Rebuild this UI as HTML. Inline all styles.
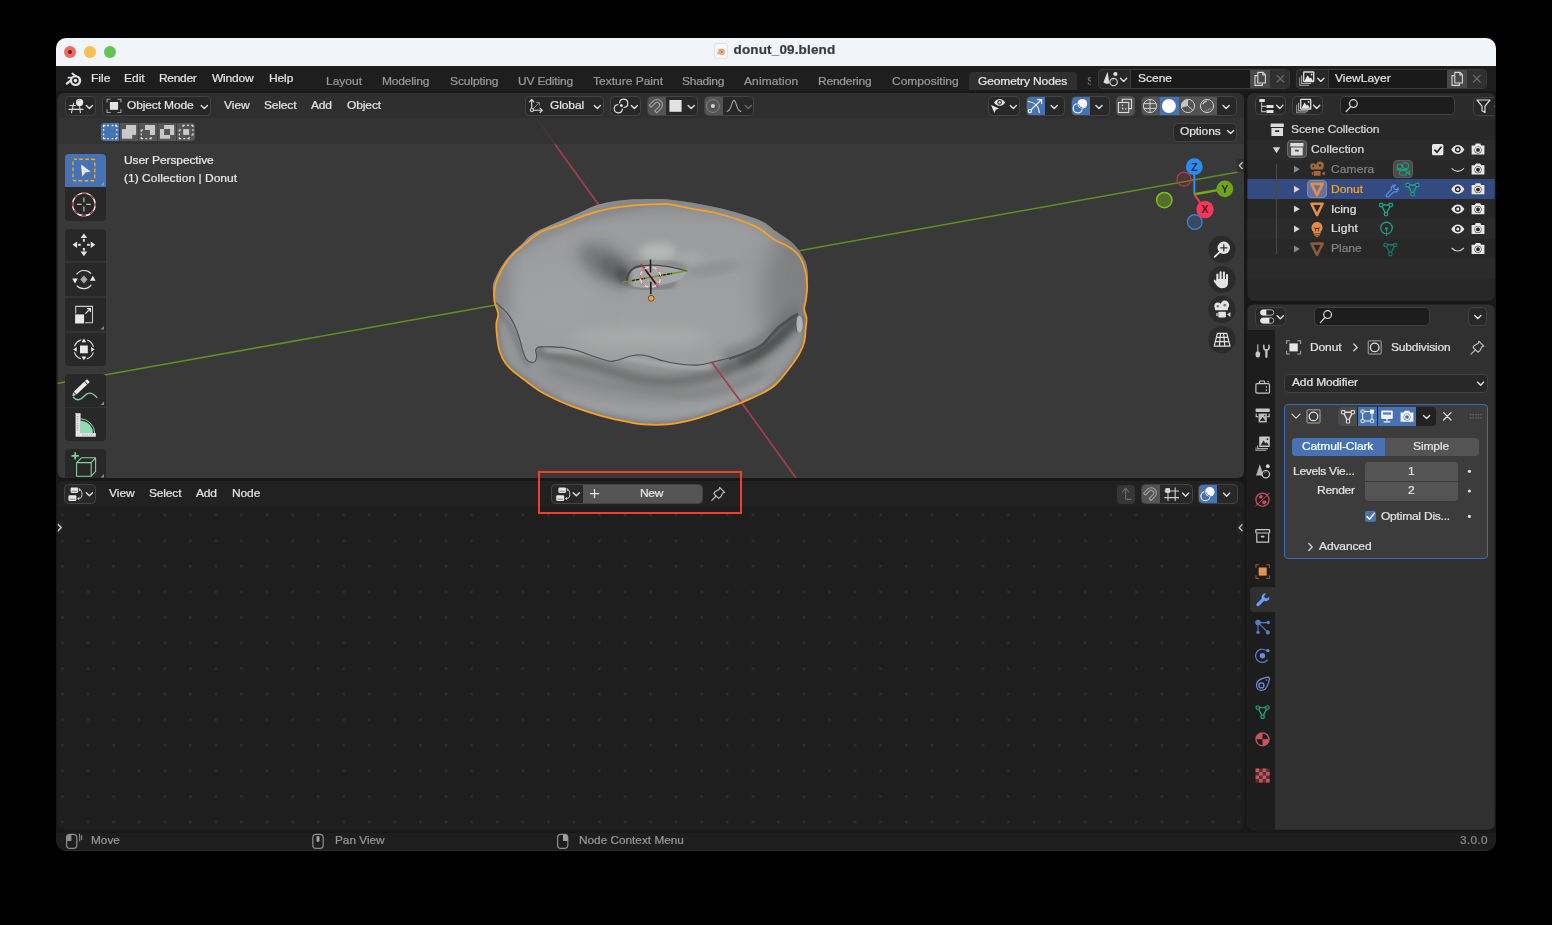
<!DOCTYPE html>
<html>
<head>
<meta charset="utf-8">
<title>donut_09.blend</title>
<style>
*{box-sizing:border-box;margin:0;padding:0}
html,body{width:1552px;height:925px;background:#000;overflow:hidden}
body{font-family:"Liberation Sans",sans-serif;font-size:12px;color:#e6e6e6;position:relative}
#win{position:absolute;left:0;top:0;width:1552px;height:925px;clip-path:inset(38px 56px 74px 56px round 10px);background:#181818;will-change:transform}
.abs{position:absolute}
.t{position:absolute;white-space:nowrap;line-height:14px;height:14px;font-size:11.2px;color:#e2e2e2;transform:scaleX(1.072);transform-origin:0 50%;margin-top:-.8px;-webkit-text-stroke:.22px}
.dim{color:#9a9a9a}
.btn{position:absolute;background:#282828;border:1px solid #434343;border-radius:4.5px}
.fld{position:absolute;background:#1d1d1d;border:1px solid #414141;border-radius:4.5px}
svg{position:absolute;overflow:visible;left:0;top:0}
svg.full{width:1552px;height:925px;pointer-events:none}
#titlebar{left:56px;top:38px;width:1440px;height:28px;background:#f1f4f8}
#menubar{left:56px;top:66px;width:1440px;height:24.5px;background:#1e1e1e}
#view3d{left:56px;top:93px;width:1188px;height:385px;background:#3d3d3d;border-radius:6px;overflow:hidden}
#nodeed{left:56px;top:481px;width:1188px;height:348px;background:#1d1d1d;border-radius:6px;overflow:hidden}
#outliner{left:1248px;top:93px;width:248px;height:208px;background:#282828;border-radius:6px;overflow:hidden}
#props{left:1248px;top:304px;width:248px;height:525px;background:#303030;border-radius:6px;overflow:hidden}
#status{left:56px;top:832.6px;width:1440px;height:19px;background:#1e1e1e}
</style>
</head>
<body>
<div id="win">
<svg width="0" height="0" style="position:absolute">
<defs>
<symbol id="chev" viewBox="-5 -5 10 10" overflow="visible"><path d="M-3.1 -1.5L0 1.6L3.1 -1.5" fill="none" stroke="#e2e2e2" stroke-width="1.35" stroke-linecap="round" stroke-linejoin="round"/></symbol>
<symbol id="chevr" viewBox="-5 -5 10 10" overflow="visible"><path d="M-1.6 -3.4L1.8 0L-1.6 3.4" fill="none" stroke="#d0d0d0" stroke-width="1.4" stroke-linecap="round" stroke-linejoin="round"/></symbol>
<symbol id="eye" viewBox="-8 -8 16 16" overflow="visible"><path d="M-6.6 0C-4.6 -3.4 -2.2 -4.6 0 -4.6S4.6 -3.4 6.6 0C4.6 3.4 2.2 4.6 0 4.6S-4.6 3.4 -6.6 0Z" fill="#e6e6e6"/><circle r="2.9" fill="#282828"/><circle r="1.5" fill="#e6e6e6"/></symbol>
<symbol id="cam" viewBox="-8 -8 16 16" overflow="visible"><path d="M-6.4 -3.6H-3.2L-2.2 -5.4H2.2L3.2 -3.6H6.4V5.6H-6.4Z" fill="#e6e6e6"/><circle cy="0.9" r="3.5" fill="#282828"/><circle cy="0.9" r="2.5" fill="none" stroke="#e6e6e6" stroke-width="1.1"/></symbol>
<symbol id="mesh" viewBox="-8 -8 16 16" overflow="visible"><path d="M-4.8 -4.2H4.8L0 5Z" fill="none" stroke-width="1.4" stroke-linejoin="round"/><rect x="-6.4" y="-5.8" width="3.2" height="3.2" rx=".6" fill="#282828" stroke-width="1.1"/><rect x="3.2" y="-5.8" width="3.2" height="3.2" rx=".6" fill="#282828" stroke-width="1.1"/><rect x="-1.6" y="3.4" width="3.2" height="3.2" rx=".6" fill="#282828" stroke-width="1.1"/></symbol>
<symbol id="tri" viewBox="-8 -8 16 16" overflow="visible"><path d="M-5.6 -5.2H5.6L0 6.2Z" fill="none" stroke-width="2.6" stroke-linejoin="round"/></symbol>
<symbol id="box" viewBox="-8 -8 16 16" overflow="visible"><rect x="-6.6" y="-6.2" width="13.2" height="3.6" rx=".6"/><path d="M-5.8 -1.6H5.8V6.4H-5.8ZM-2 .6V2.4H2V.6Z" fill-rule="evenodd"/></symbol>
</defs>
</svg>
<div id="titlebar" class="abs"></div>
<div class="abs" style="left:64px;top:46px;width:12px;height:12px;border-radius:50%;background:#ec6a5e"></div>
<div class="abs" style="left:68px;top:50px;width:4px;height:4px;border-radius:50%;background:#7d1a10"></div>
<div class="abs" style="left:84px;top:46px;width:12px;height:12px;border-radius:50%;background:#f4bf4f"></div>
<div class="abs" style="left:104px;top:46px;width:12px;height:12px;border-radius:50%;background:#61c554"></div>
<div class="abs" style="left:715px;top:44px;width:12px;height:14px;border-radius:1.5px;background:#f7f7f7;box-shadow:0 0 1.5px rgba(0,0,0,.35)"></div>
<svg class="full" viewBox="0 0 1552 925"><g fill="none" stroke="#e9a56a" stroke-width="1.3" stroke-linecap="round"><circle cx="721.6" cy="52" r="2.6" fill="#f0c39a"/><path d="M717.5 53.6L721 50.6M718.6 49.6H722"/></g><circle cx="721.7" cy="52" r="0.9" fill="#4a6fb5"/></svg>
<div class="t" style="left:733.5px;top:43px;height:16px;line-height:16px;font-size:13.5px;font-weight:bold;color:#3c3c3c;letter-spacing:.15px;transform:none">donut_09.blend</div>

<div id="menubar" class="abs"></div>
<svg class="full" viewBox="0 0 1552 925">
<g stroke="#e4e4e4" stroke-linecap="round" fill="none">
<path d="M66.8 83.6L73.6 78.2" stroke-width="2.2"/>
<path d="M68.4 77.6H75.5" stroke-width="1.9"/>
<path d="M72.4 73.5L76.4 76.8" stroke-width="1.9"/>
</g>
<ellipse cx="75.6" cy="80.6" rx="5.6" ry="5.4" fill="#e4e4e4"/>
<circle cx="75.4" cy="80.6" r="3.3" fill="#1e1e1e"/>
<circle cx="75.4" cy="80.6" r="1.8" fill="#e4e4e4"/>
</svg>
<div class="t" style="left:91px;top:72px">File</div>
<div class="t" style="left:124px;top:72px">Edit</div>
<div class="t" style="left:159px;top:72px;letter-spacing:-.3px">Render</div>
<div class="t" style="left:211.5px;top:72px;letter-spacing:-.2px">Window</div>
<div class="t" style="left:268.5px;top:72px;letter-spacing:-.1px">Help</div>

<div class="t dim" style="left:326px;top:75px">Layout</div>
<div class="t dim" style="left:382px;top:75px;letter-spacing:-.15px">Modeling</div>
<div class="t dim" style="left:449.5px;top:75px;letter-spacing:-.1px">Sculpting</div>
<div class="t dim" style="left:518px;top:75px;letter-spacing:-.15px">UV Editing</div>
<div class="t dim" style="left:593px;top:75px">Texture Paint</div>
<div class="t dim" style="left:682px;top:75px;letter-spacing:-.25px">Shading</div>
<div class="t dim" style="left:744px;top:75px;letter-spacing:.1px">Animation</div>
<div class="t dim" style="left:818px;top:75px;letter-spacing:-.2px">Rendering</div>
<div class="t dim" style="left:891.5px;top:75px">Compositing</div>
<div class="abs" style="left:969px;top:72px;width:108px;height:18.3px;background:#2f2f2f;border-radius:4px 4px 0 0"></div>
<div class="t" style="left:977.5px;top:75px;color:#e6e6e6;letter-spacing:-.1px">Geometry Nodes</div>
<div class="abs" style="left:1087px;top:75px;width:4px;height:14px;overflow:hidden"><div class="t dim" style="left:0;top:0;color:#777">S</div></div>

<!-- scene selector -->
<div class="abs" style="left:1098px;top:69px;width:192px;height:20px;border-radius:4px;background:#282828;border:1px solid #3a3a3a;overflow:hidden">
 <div class="abs" style="left:31px;top:-1px;width:120px;height:20px;background:#1a1a1a;border-left:1px solid #3a3a3a"></div>
 <div class="abs" style="left:151px;top:-1px;width:20px;height:20px;background:#484848"></div>
 <div class="abs" style="left:171px;top:-1px;width:20px;height:20px;background:#303030"></div>
</div>
<div class="t" style="left:1137.5px;top:71.5px">Scene</div>
<div class="abs" style="left:1296px;top:69px;width:191px;height:20px;border-radius:4px;background:#282828;border:1px solid #3a3a3a;overflow:hidden">
 <div class="abs" style="left:31px;top:-1px;width:120px;height:20px;background:#1a1a1a;border-left:1px solid #3a3a3a"></div>
 <div class="abs" style="left:150px;top:-1px;width:20px;height:20px;background:#484848"></div>
 <div class="abs" style="left:170px;top:-1px;width:20px;height:20px;background:#303030"></div>
</div>
<div class="t" style="left:1334.5px;top:71.5px">ViewLayer</div>
<svg class="full" viewBox="0 0 1552 925">
<path d="M1107.6 71.8L1109.4 83.2Q1106 84.6 1103.4 82.2Z" fill="#dedede"/>
<circle cx="1115.4" cy="74" r="2.1" fill="#e4e4e4"/>
<circle cx="1113.6" cy="82" r="3.7" fill="#282828" stroke="#d2d2d2" stroke-width="1.2"/><path d="M1111.8 81Q1112.6 79.8 1114 79.8" stroke="#888" stroke-width=".8" fill="none"/>
<use href="#chev" x="1118.6" y="74.8" width="10" height="10"/>
<g id="cpy" fill="none" stroke="#d8d8d8" stroke-width="1.1"><path d="M1257.6 75.6H1255V85.4H1262.4V83.2"/><path d="M1257.8 72.4H1263L1265.4 74.8V83H1257.8Z" fill="#484848"/><path d="M1262.8 72.6V75H1265.2"/></g>
<path d="M1277 75.4L1283.6 82M1283.6 75.4L1277 82" stroke="#6c6c6c" stroke-width="1.2" stroke-linecap="round"/>
<use href="#vlico" x="3" y="-27.4"/>
<use href="#chev" x="1315.8" y="74.8" width="10" height="10"/>
<use href="#cpy" x="197" y="0"/>
<path d="M1473.6 75.4L1480.2 82M1480.2 75.4L1473.6 82" stroke="#6c6c6c" stroke-width="1.2" stroke-linecap="round"/>
</svg>
<div id="v3d" class="abs" style="left:0;top:0;width:1552px;height:925px;clip-path:inset(93.2px 308px 447px 57.6px round 6px);background:#393939">
<svg class="full" viewBox="0 0 1552 925">
<defs>
<clipPath id="dsil"><path d="M492.9 286.0C493.3 281.7 495.4 278.5 497.0 275.0C498.6 271.5 500.4 268.3 502.7 264.8C505.0 261.3 508.0 257.3 511.0 254.0C514.0 250.7 517.2 248.5 520.9 245.1C524.6 241.7 527.2 237.4 533.0 233.7C538.8 230.0 547.9 226.6 555.7 223.1C563.5 219.6 572.6 215.7 579.9 212.5C587.2 209.3 591.8 206.3 599.6 204.2C607.4 202.1 616.7 200.6 626.8 199.7C636.9 198.8 652.8 198.9 660.0 198.9C667.2 198.9 663.5 198.8 670.3 199.7C677.0 200.6 690.4 202.3 700.5 204.2C710.6 206.1 720.7 208.2 730.8 211.0C740.9 213.8 753.5 217.5 761.1 220.9C768.7 224.3 771.2 228.0 776.2 231.5C781.2 235.0 787.4 238.6 791.4 242.1C795.4 245.6 797.9 248.9 800.4 252.7C802.9 256.5 805.2 260.2 806.5 264.8C807.8 269.4 807.9 275.8 808.0 280.0C808.1 284.2 807.6 286.5 807.2 290.0C806.8 293.5 806.2 298.0 805.7 301.1C805.2 304.2 804.1 305.9 804.2 308.7C804.3 311.5 806.2 314.8 806.5 318.2C806.8 321.6 806.1 324.8 805.7 328.8C805.3 332.8 805.3 338.1 804.2 342.4C803.1 346.7 801.5 350.0 798.9 354.5C796.2 359.0 792.1 364.7 788.3 369.6C784.5 374.5 780.2 380.2 776.2 384.0C772.2 387.8 769.1 389.5 764.1 392.3C759.1 395.1 751.5 398.2 746.0 400.6C740.5 403.0 736.4 404.6 730.8 406.7C725.2 408.8 719.4 411.2 712.6 413.5C705.8 415.8 697.6 418.5 690.0 420.3C682.4 422.1 675.0 423.7 667.2 424.4C659.5 425.1 650.7 424.9 643.5 424.4C636.3 423.8 630.9 422.5 623.8 421.1C616.7 419.7 608.7 417.9 601.1 415.8C593.5 413.7 585.5 411.2 578.4 408.7C571.3 406.2 565.0 403.5 558.7 400.7C552.4 397.9 545.8 394.8 540.5 391.6C535.2 388.4 531.2 384.9 526.9 381.7C522.6 378.5 518.3 375.7 514.8 372.7C511.3 369.7 508.2 367.1 505.7 363.6C503.2 360.1 501.1 355.5 499.7 351.5C498.3 347.5 498.0 343.9 497.4 339.4C496.8 334.8 496.2 328.5 496.3 324.2C496.4 319.9 498.5 317.5 498.2 313.6C497.9 309.7 495.3 305.6 494.4 301.0C493.5 296.4 492.5 290.3 492.9 286.0Z"/></clipPath>
<clipPath id="dbody"><path d="M496.6 303.0C497.5 303.8 500.0 306.0 502.0 308.0C504.0 310.0 506.8 312.4 508.8 315.1C510.8 317.8 512.5 321.0 514.0 324.0C515.5 327.0 516.7 330.3 517.8 333.3C518.9 336.3 519.6 339.0 520.5 342.0C521.4 345.0 522.1 348.6 523.1 351.5C524.1 354.4 525.1 357.7 526.5 359.5C527.9 361.3 530.0 362.1 531.5 362.4C533.0 362.6 534.4 362.1 535.3 361.0C536.1 359.9 536.5 357.8 536.6 356.0C536.7 354.2 535.5 351.9 535.6 350.5C535.7 349.1 536.4 348.2 537.2 347.6C538.0 347.0 538.0 347.0 540.5 346.9C543.0 346.8 548.0 346.8 552.0 346.9C556.0 347.0 560.8 347.1 564.8 347.7C568.8 348.2 572.5 349.2 576.0 350.2C579.5 351.2 582.5 352.5 586.0 353.7C589.5 354.9 593.2 356.3 597.0 357.5C600.8 358.7 605.9 360.4 608.7 361.0C611.5 361.6 612.2 361.1 614.0 360.9C615.8 360.7 617.1 360.4 619.2 359.8C621.3 359.2 624.0 358.0 626.5 357.2C629.0 356.4 632.1 355.6 634.4 355.2C636.6 354.8 638.0 354.9 640.0 355.0C642.0 355.1 644.0 355.1 646.5 355.7C649.0 356.2 652.2 357.4 655.1 358.3C658.0 359.2 660.7 360.2 664.0 361.0C667.3 361.8 671.1 362.7 674.8 363.3C678.5 363.9 682.2 364.5 686.0 364.8C689.8 365.1 694.3 365.2 697.5 365.1C700.7 365.0 702.5 364.5 705.0 364.0C707.5 363.5 709.3 362.9 712.6 362.1C715.9 361.3 720.7 360.1 725.0 359.0C729.3 357.9 734.2 356.6 738.4 355.2C742.6 353.8 746.2 352.4 750.0 350.8C753.8 349.2 758.1 347.5 761.1 345.4C764.1 343.3 766.0 340.3 768.0 338.0C770.0 335.7 771.4 333.8 773.2 331.8C775.0 329.8 777.0 327.8 779.0 326.0C781.0 324.2 783.3 322.7 785.3 321.2C787.3 319.7 789.0 318.3 791.0 317.0C793.0 315.7 796.3 314.2 797.4 313.6L806.5 318.2L805.7 328.8L804.2 342.4L798.9 354.5L788.3 369.6L776.2 384.0L764.1 392.3L746.0 400.6L730.8 406.7L712.6 413.5L690.0 420.3L667.2 424.4L643.5 424.4L623.8 421.1L601.1 415.8L578.4 408.7L558.7 400.7L540.5 391.6L526.9 381.7L514.8 372.7L505.7 363.6L499.7 351.5L497.4 339.4L496.3 324.2L498.2 313.6L494.4 301.0Z"/></clipPath>
<clipPath id="dhole"><path d="M626.9 278.5C627.0 277.1 627.4 274.9 628.0 273.5C628.6 272.1 629.2 271.1 630.5 270.0C631.8 268.9 633.6 267.8 636.0 267.0C638.4 266.2 641.7 265.8 645.0 265.5C648.3 265.2 652.2 265.1 656.0 265.3C659.8 265.6 664.2 266.3 668.0 267.0C671.8 267.7 675.9 268.6 679.0 269.3C682.1 270.0 685.5 270.1 686.5 271.0C687.5 271.9 686.0 273.4 685.2 274.5C684.5 275.6 683.7 276.4 682.0 277.5C680.3 278.6 678.3 280.0 675.0 281.2C671.7 282.4 666.0 283.6 662.0 284.6C658.0 285.6 654.7 286.7 651.0 287.2C647.3 287.7 643.3 287.9 640.0 287.6C636.7 287.3 633.1 286.4 631.0 285.5C628.9 284.6 628.2 283.2 627.5 282.0C626.8 280.8 626.8 279.9 626.9 278.5Z"/></clipPath>
<filter id="b1" x="-30%" y="-30%" width="160%" height="160%"><feGaussianBlur stdDeviation=".7"/></filter>
<filter id="b2" x="-30%" y="-30%" width="160%" height="160%"><feGaussianBlur stdDeviation="2"/></filter>
<filter id="b4" x="-30%" y="-30%" width="160%" height="160%"><feGaussianBlur stdDeviation="4"/></filter>
<filter id="b7" x="-40%" y="-40%" width="180%" height="180%"><feGaussianBlur stdDeviation="7"/></filter>
<filter id="b12" x="-50%" y="-50%" width="200%" height="200%"><feGaussianBlur stdDeviation="12"/></filter>
<linearGradient id="gtop" x1="0" y1="198" x2="0" y2="425" gradientUnits="userSpaceOnUse"><stop offset="0" stop-color="#8e8f90"/><stop offset=".12" stop-color="#9b9c9d"/><stop offset=".6" stop-color="#9fa0a1"/><stop offset="1" stop-color="#999a9b"/></linearGradient>
<linearGradient id="ghole" x1="624" y1="0" x2="688" y2="0" gradientUnits="userSpaceOnUse"><stop offset="0" stop-color="#4c4c4e"/><stop offset=".06" stop-color="#7d7e7f"/><stop offset=".16" stop-color="#a3a4a5"/><stop offset="1" stop-color="#a7a8a9"/></linearGradient>
<linearGradient id="gred" x1="0" y1="118" x2="0" y2="146" gradientUnits="userSpaceOnUse"><stop offset="0" stop-color="#a03c4d" stop-opacity=".15"/><stop offset=".9" stop-color="#a03c4d" stop-opacity=".55"/><stop offset="1" stop-color="#a03c4d"/></linearGradient>
</defs>
<path d="M56 383.7L1244 171.0" stroke="#638e22" stroke-width="1.5"/>
<path d="M536.3 118.3L556.3 146" stroke="url(#gred)" stroke-width="1.6"/>
<path d="M555.9 145.5L796.0 478" stroke="#a23d4e" stroke-width="1.7"/>
<g clip-path="url(#dsil)">
<rect x="485" y="190" width="330" height="245" fill="url(#gtop)"/>
<ellipse cx="798" cy="298" rx="36" ry="72" fill="#68696b" opacity=".55" filter="url(#b12)"/>
<path d="M722 356Q750 350 766 338T798 308" stroke="#646567" stroke-width="12" fill="none" opacity=".5" filter="url(#b4)"/>
<ellipse cx="497" cy="290" rx="14" ry="50" fill="#77787a" opacity=".5" filter="url(#b7)"/>
<path d="M500 262Q560 214 660 200Q760 206 800 250" stroke="#77787a" stroke-width="9" fill="none" opacity=".55" filter="url(#b4)"/>
<path d="M628 284L634 266L622 254L604 245L586 243L577 252L583 266L593 276L609 283L622 287Z" fill="#5f6063" opacity=".62" filter="url(#b7)"/>
<path d="M630 266Q642 261.5 658 262T686 268" stroke="#6f7071" stroke-width="5" fill="none" opacity=".55" filter="url(#b2)"/>
<path d="M627 284L631 270L622 262L610 257L600 258L600 268L607 277L618 283Z" fill="#525255" opacity=".5" filter="url(#b4)"/>
<path d="M627 284L630 273L625 268L618 268L615 274L619 281Z" fill="#454548" opacity=".55" filter="url(#b2)"/>
<path d="M624 282.5Q640 289.5 656 288T676 282.5" stroke="#58585a" stroke-width="3" fill="none" opacity=".75" filter="url(#b2)"/>
<ellipse cx="714" cy="268.5" rx="28" ry="5" transform="rotate(-9 714 268.5)" fill="#777879" opacity=".4" filter="url(#b4)"/>
<ellipse cx="658" cy="252" rx="19" ry="9" fill="#c4c5c5" opacity=".7" filter="url(#b4)"/>
<ellipse cx="690" cy="258" rx="14" ry="6" fill="#b4b5b5" opacity=".5" filter="url(#b4)"/>
<ellipse cx="640" cy="338" rx="70" ry="12" fill="#b4b5b5" opacity=".5" filter="url(#b7)"/>
<ellipse cx="560" cy="300" rx="40" ry="30" fill="#a6a7a8" opacity=".4" filter="url(#b12)"/>

<g clip-path="url(#dbody)">
<rect x="485" y="295" width="330" height="140" fill="#949596"/>
<path d="M496 304Q512 318 519 338T531 362" stroke="#6c6d6f" stroke-width="6" fill="none" opacity=".5" filter="url(#b2)" transform="translate(-2 3)"/>
<path d="M534 351Q580 361 620 374T700 378T760 353T797 318" stroke="#626364" stroke-width="9" fill="none" opacity=".85" filter="url(#b4)"/>
<path d="M548 369Q600 387 660 393T762 372" stroke="#727374" stroke-width="6" fill="none" opacity=".65" filter="url(#b4)"/>
<path d="M720 367Q762 358 800 318" stroke="#555658" stroke-width="7" fill="none" opacity=".65" filter="url(#b4)"/>
<path d="M744 360Q764 352 777 339T800 316" stroke="#403f40" stroke-width="8" fill="none" opacity=".7" filter="url(#b4)" stroke-linecap="round"/>
<path d="M544 350Q590 351 640 360T712 366" stroke="#b3b4b5" stroke-width="5" fill="none" opacity=".7" filter="url(#b2)"/>
<path d="M560 398Q620 413 670 412T770 384" stroke="#a9aaab" stroke-width="9" fill="none" opacity=".6" filter="url(#b4)"/>
<path d="M495.1 286.0C496.2 281.0 498.7 275.6 501.2 270.8C503.7 266.0 506.3 261.7 510.3 257.2C514.3 252.7 520.4 247.8 525.4 243.6C530.4 239.4 534.5 235.4 540.5 232.2C546.5 229.0 554.1 227.5 561.7 224.6C569.3 221.7 578.1 217.4 585.9 214.8C593.7 212.2 601.1 210.3 608.7 208.8C616.3 207.3 622.9 206.5 631.4 205.7C639.9 204.9 653.8 204.4 660.0 204.2C666.2 203.9 663.3 203.4 668.8 204.2C674.3 205.0 685.2 207.3 693.0 208.8C700.8 210.3 708.1 211.2 715.7 213.0C723.3 214.8 731.4 217.2 738.4 219.7C745.4 222.1 752.2 224.5 758.0 227.7C763.8 230.9 768.2 235.8 773.2 239.0C778.2 242.2 784.0 243.8 788.3 246.6C792.6 249.4 796.1 251.9 798.9 255.7C801.7 259.5 803.6 264.2 805.0 269.3C806.4 274.4 807.1 280.7 807.2 286.0C807.3 291.3 806.2 297.3 805.7 301.1C805.2 304.9 804.1 305.9 804.2 308.7C804.3 311.5 806.2 314.8 806.5 318.2C806.8 321.6 806.1 324.8 805.7 328.8C805.3 332.8 805.3 338.1 804.2 342.4C803.1 346.7 801.5 350.0 798.9 354.5C796.2 359.0 792.1 364.7 788.3 369.6C784.5 374.5 780.2 380.2 776.2 384.0C772.2 387.8 769.1 389.5 764.1 392.3C759.1 395.1 751.5 398.2 746.0 400.6C740.5 403.0 736.4 404.6 730.8 406.7C725.2 408.8 719.4 411.2 712.6 413.5C705.8 415.8 697.6 418.5 690.0 420.3C682.4 422.1 675.0 423.7 667.2 424.4C659.5 425.1 650.7 424.9 643.5 424.4C636.3 423.8 630.9 422.5 623.8 421.1C616.7 419.7 608.7 417.9 601.1 415.8C593.5 413.7 585.5 411.2 578.4 408.7C571.3 406.2 565.0 403.5 558.7 400.7C552.4 397.9 545.8 394.8 540.5 391.6C535.2 388.4 531.2 384.9 526.9 381.7C522.6 378.5 518.3 375.7 514.8 372.7C511.3 369.7 508.2 367.1 505.7 363.6C503.2 360.1 501.1 355.5 499.7 351.5C498.3 347.5 498.0 343.9 497.4 339.4C496.8 334.8 496.2 328.5 496.3 324.2C496.4 319.9 498.5 317.5 498.2 313.6C497.9 309.7 494.9 305.6 494.4 301.0C493.9 296.4 494.0 291.0 495.1 286.0Z" stroke="#707173" stroke-width="6" fill="none" opacity=".6" filter="url(#b2)"/>
</g>
<ellipse cx="799.4" cy="324" rx="3.3" ry="8.6" fill="#b8b9b9" filter="url(#b1)" opacity=".95"/><path d="M796.4 316Q795 324 796.8 332" stroke="#5a5a5c" stroke-width="1.2" fill="none" filter="url(#b1)" opacity=".7"/>
<path d="M626.9 278.5C627.0 277.1 627.4 274.9 628.0 273.5C628.6 272.1 629.2 271.1 630.5 270.0C631.8 268.9 633.6 267.8 636.0 267.0C638.4 266.2 641.7 265.8 645.0 265.5C648.3 265.2 652.2 265.1 656.0 265.3C659.8 265.6 664.2 266.3 668.0 267.0C671.8 267.7 675.9 268.6 679.0 269.3C682.1 270.0 685.5 270.1 686.5 271.0C687.5 271.9 686.0 273.4 685.2 274.5C684.5 275.6 683.7 276.4 682.0 277.5C680.3 278.6 678.3 280.0 675.0 281.2C671.7 282.4 666.0 283.6 662.0 284.6C658.0 285.6 654.7 286.7 651.0 287.2C647.3 287.7 643.3 287.9 640.0 287.6C636.7 287.3 633.1 286.4 631.0 285.5C628.9 284.6 628.2 283.2 627.5 282.0C626.8 280.8 626.8 279.9 626.9 278.5Z" fill="url(#ghole)"/>
<path d="M626.6 282C627.6 274 629.6 270.6 634 268C636 267 638 266.4 641 266" stroke="#403e3f" stroke-width="2" fill="none" stroke-linecap="round" filter="url(#b1)" opacity=".85"/>
<path d="M626.8 278.6C628 273 629.6 270.6 634 268C640 265.4 650 264.9 658 265.3C668 266 678 268.4 686.8 271" stroke="#48484a" stroke-width="1.2" fill="none" stroke-linecap="round"/>
<path d="M730 358.6Q750 352.5 764 343.5Q776 328 797 314.5" stroke="#47474a" stroke-width="2.6" fill="none" opacity=".7" filter="url(#b1)" stroke-linecap="round"/>
<path d="M742 361.5Q760 355 774 343T795 322" stroke="#555557" stroke-width="2.4" fill="none" opacity=".55" filter="url(#b2)" stroke-linecap="round"/>
<path d="M496.6 303.0C497.5 303.8 500.0 306.0 502.0 308.0C504.0 310.0 506.8 312.4 508.8 315.1C510.8 317.8 512.5 321.0 514.0 324.0C515.5 327.0 516.7 330.3 517.8 333.3C518.9 336.3 519.6 339.0 520.5 342.0C521.4 345.0 522.1 348.6 523.1 351.5C524.1 354.4 525.1 357.7 526.5 359.5C527.9 361.3 530.0 362.1 531.5 362.4C533.0 362.6 534.4 362.1 535.3 361.0C536.1 359.9 536.5 357.8 536.6 356.0C536.7 354.2 535.5 351.9 535.6 350.5C535.7 349.1 536.4 348.2 537.2 347.6C538.0 347.0 538.0 347.0 540.5 346.9C543.0 346.8 548.0 346.8 552.0 346.9C556.0 347.0 560.8 347.1 564.8 347.7C568.8 348.2 572.5 349.2 576.0 350.2C579.5 351.2 582.5 352.5 586.0 353.7C589.5 354.9 593.2 356.3 597.0 357.5C600.8 358.7 605.9 360.4 608.7 361.0C611.5 361.6 612.2 361.1 614.0 360.9C615.8 360.7 617.1 360.4 619.2 359.8C621.3 359.2 624.0 358.0 626.5 357.2C629.0 356.4 632.1 355.6 634.4 355.2C636.6 354.8 638.0 354.9 640.0 355.0C642.0 355.1 644.0 355.1 646.5 355.7C649.0 356.2 652.2 357.4 655.1 358.3C658.0 359.2 660.7 360.2 664.0 361.0C667.3 361.8 671.1 362.7 674.8 363.3C678.5 363.9 682.2 364.5 686.0 364.8C689.8 365.1 694.3 365.2 697.5 365.1C700.7 365.0 702.5 364.5 705.0 364.0C707.5 363.5 709.3 362.9 712.6 362.1C715.9 361.3 720.7 360.1 725.0 359.0C729.3 357.9 734.2 356.6 738.4 355.2C742.6 353.8 746.2 352.4 750.0 350.8C753.8 349.2 758.1 347.5 761.1 345.4C764.1 343.3 766.0 340.3 768.0 338.0C770.0 335.7 771.4 333.8 773.2 331.8C775.0 329.8 777.0 327.8 779.0 326.0C781.0 324.2 783.3 322.7 785.3 321.2C787.3 319.7 789.0 318.3 791.0 317.0C793.0 315.7 796.3 314.2 797.4 313.6" stroke="#4e4e50" stroke-width="1.1" fill="none" stroke-linecap="round"/>
</g>
<path d="M711.4 361.8L748.4 412" stroke="#a23d4e" stroke-width="1.7"/>
<path d="M495.1 286.0C496.2 281.0 498.7 275.6 501.2 270.8C503.7 266.0 506.3 261.7 510.3 257.2C514.3 252.7 520.4 247.8 525.4 243.6C530.4 239.4 534.5 235.4 540.5 232.2C546.5 229.0 554.1 227.5 561.7 224.6C569.3 221.7 578.1 217.4 585.9 214.8C593.7 212.2 601.1 210.3 608.7 208.8C616.3 207.3 622.9 206.5 631.4 205.7C639.9 204.9 653.8 204.4 660.0 204.2C666.2 203.9 663.3 203.4 668.8 204.2C674.3 205.0 685.2 207.3 693.0 208.8C700.8 210.3 708.1 211.2 715.7 213.0C723.3 214.8 731.4 217.2 738.4 219.7C745.4 222.1 752.2 224.5 758.0 227.7C763.8 230.9 768.2 235.8 773.2 239.0C778.2 242.2 784.0 243.8 788.3 246.6C792.6 249.4 796.1 251.9 798.9 255.7C801.7 259.5 803.6 264.2 805.0 269.3C806.4 274.4 807.1 280.7 807.2 286.0C807.3 291.3 806.2 297.3 805.7 301.1C805.2 304.9 804.1 305.9 804.2 308.7C804.3 311.5 806.2 314.8 806.5 318.2C806.8 321.6 806.1 324.8 805.7 328.8C805.3 332.8 805.3 338.1 804.2 342.4C803.1 346.7 801.5 350.0 798.9 354.5C796.2 359.0 792.1 364.7 788.3 369.6C784.5 374.5 780.2 380.2 776.2 384.0C772.2 387.8 769.1 389.5 764.1 392.3C759.1 395.1 751.5 398.2 746.0 400.6C740.5 403.0 736.4 404.6 730.8 406.7C725.2 408.8 719.4 411.2 712.6 413.5C705.8 415.8 697.6 418.5 690.0 420.3C682.4 422.1 675.0 423.7 667.2 424.4C659.5 425.1 650.7 424.9 643.5 424.4C636.3 423.8 630.9 422.5 623.8 421.1C616.7 419.7 608.7 417.9 601.1 415.8C593.5 413.7 585.5 411.2 578.4 408.7C571.3 406.2 565.0 403.5 558.7 400.7C552.4 397.9 545.8 394.8 540.5 391.6C535.2 388.4 531.2 384.9 526.9 381.7C522.6 378.5 518.3 375.7 514.8 372.7C511.3 369.7 508.2 367.1 505.7 363.6C503.2 360.1 501.1 355.5 499.7 351.5C498.3 347.5 498.0 343.9 497.4 339.4C496.8 334.8 496.2 328.5 496.3 324.2C496.4 319.9 498.5 317.5 498.2 313.6C497.9 309.7 494.9 305.6 494.4 301.0C493.9 296.4 494.0 291.0 495.1 286.0Z" fill="none" stroke="#fa9f27" stroke-width="1.75" stroke-linejoin="round"/>
<path d="M623 282.2L684.6 271.2" stroke="#6b9a2b" stroke-width="1.6"/>
<path d="M632 280.6L645 278.3M659 275.8L672 273.4" stroke="#1d2414" stroke-width="1.4" stroke-dasharray="3 1"/>
<path d="M641.1 263.9L657.7 286.3" stroke="#a8323f" stroke-width="1.7"/>
<path d="M644.5 268.6L655.5 283.4" stroke="#3a1016" stroke-width="1.5"/>
<circle cx="650.5" cy="277.2" r="10.2" fill="none" stroke="#e2e2e2" stroke-width="1.1"/>
<circle cx="650.5" cy="277.2" r="10.2" fill="none" stroke="#d8585e" stroke-width="1.1" stroke-dasharray="4 4.01" stroke-dashoffset="2"/>
<path d="M650.5 259.4V272.4M650.8 281.8V294.2" stroke="#1b1b1b" stroke-width="1.5"/>
<circle cx="651.2" cy="298.3" r="2.9" fill="#f9a22d" stroke="#5b4a36" stroke-width=".9"/>
</svg>
<div class="abs" style="left:56px;top:93px;width:1188px;height:24.5px;background:#2f2f2f"></div>
<div class="abs" style="left:56px;top:117.5px;width:1188px;height:26.5px;background:rgba(45,45,45,.5)"></div>

<!-- header left -->
<div class="btn" style="left:64.5px;top:96.2px;width:31px;height:19.4px"></div>
<div class="btn" style="left:101.5px;top:96.2px;width:109px;height:19.4px"></div>
<div class="t" style="left:127px;top:98.5px;letter-spacing:-.12px">Object Mode</div>
<div class="t" style="left:223.5px;top:98.5px">View</div>
<div class="t" style="left:264px;top:98.5px;letter-spacing:-.15px">Select</div>
<div class="t" style="left:311px;top:98.5px;letter-spacing:-.2px">Add</div>
<div class="t" style="left:347px;top:98.5px;letter-spacing:-.1px">Object</div>

<!-- header centre -->
<div class="btn" style="left:525px;top:96.2px;width:78.5px;height:19.4px"></div>
<div class="t" style="left:550px;top:98.5px;letter-spacing:-.1px">Global</div>
<div class="btn" style="left:609.5px;top:96.2px;width:31px;height:19.4px"></div>
<div class="btn" style="left:647px;top:96.2px;width:50.5px;height:19.4px;overflow:hidden"><div class="abs" style="left:-1px;top:-1px;width:18.5px;height:19.4px;background:#545454"></div></div>
<div class="btn" style="left:703.5px;top:96.2px;width:50.5px;height:19.4px;overflow:hidden"><div class="abs" style="left:-1px;top:-1px;width:19px;height:19.4px;background:#545454"></div></div>

<!-- header right -->
<div class="btn" style="left:988px;top:96.2px;width:31.5px;height:19.4px"></div>
<div class="btn" style="left:1026px;top:96.2px;width:38.5px;height:19.4px;overflow:hidden"><div class="abs" style="left:-1px;top:-1px;width:19px;height:19.4px;background:#4772b3"></div></div>
<div class="btn" style="left:1070.5px;top:96.2px;width:39px;height:19.4px;overflow:hidden"><div class="abs" style="left:-1px;top:-1px;width:19.5px;height:19.4px;background:#4772b3"></div></div>
<div class="abs" style="left:1115.5px;top:96.2px;width:19px;height:19.4px;border-radius:4.5px;background:#515151"></div>
<div class="btn" style="left:1140.5px;top:96.2px;width:96px;height:19.4px;overflow:hidden;background:#282828">
 <div class="abs" style="left:-1px;top:-1px;width:19.5px;height:19.4px;background:#545454"></div>
 <div class="abs" style="left:18.5px;top:-1px;width:18.5px;height:19.4px;background:#4772b3"></div>
 <div class="abs" style="left:37.5px;top:-1px;width:18.5px;height:19.4px;background:#545454"></div>
 <div class="abs" style="left:56.5px;top:-1px;width:18.5px;height:19.4px;background:#545454"></div>
</div>
<div class="btn" style="left:1172.5px;top:122.5px;width:64.5px;height:19.4px"></div>
<div class="t" style="left:1179.5px;top:124.5px;letter-spacing:-.1px">Options</div>

<!-- select-mode buttons in tool settings -->
<div class="abs" style="left:101px;top:123px;width:94px;height:18px;border-radius:4px;overflow:hidden;background:#404040">
 <div class="abs" style="left:0;top:0;width:18.3px;height:18px;background:#4772b3"></div>
 <div class="abs" style="left:19px;top:0;width:18.2px;height:18px;background:#555"></div>
 <div class="abs" style="left:38px;top:0;width:18.2px;height:18px;background:#555"></div>
 <div class="abs" style="left:57px;top:0;width:18.2px;height:18px;background:#555"></div>
 <div class="abs" style="left:76px;top:0;width:18px;height:18px;background:#555"></div>
</div>
<!-- toolbar -->
<div class="abs" style="left:65.2px;top:153.5px;width:40.4px;height:67.5px;border-radius:4px;background:#282828;overflow:hidden"><div class="abs" style="left:0;top:0;width:41px;height:33.4px;background:#4772b3"></div></div>
<div class="abs" style="left:65.2px;top:228.5px;width:40.4px;height:137.7px;border-radius:4px;background:#282828"></div>
<div class="abs" style="left:65.2px;top:261.4px;width:40.4px;height:1.4px;background:#333"></div>
<div class="abs" style="left:65.2px;top:296.3px;width:40.4px;height:1.4px;background:#333"></div>
<div class="abs" style="left:65.2px;top:331.3px;width:40.4px;height:1.4px;background:#333"></div>
<div class="abs" style="left:65.2px;top:373.6px;width:40.4px;height:67.6px;border-radius:4px;background:#282828"></div>
<div class="abs" style="left:65.2px;top:406.5px;width:40.4px;height:1.4px;background:#333"></div>
<div class="abs" style="left:65.2px;top:448.7px;width:40.4px;height:40px;border-radius:4px;background:#282828"></div>
<div class="t" style="left:123.6px;top:153.5px;letter-spacing:-.1px;color:#e8e8e8">User Perspective</div>
<div class="t" style="left:123.6px;top:171.5px;letter-spacing:.03px;color:#e8e8e8">(1) Collection | Donut</div>
<svg class="full" viewBox="0 0 1552 925">
<!-- select box -->
<rect x="73" y="159.2" width="21.8" height="21.6" rx="1.5" fill="none" stroke="#f6a821" stroke-width="1.4" stroke-dasharray="3.6 2.4" stroke-dashoffset="1.2"/>
<path d="M81 164.6L90.6 171.6L85.4 172.6L82.2 176.6Z" fill="#ececec"/>
<path d="M104 182V185.4H100.6Z" fill="#7f9bd0"/>
<!-- cursor -->
<circle cx="83.9" cy="204.4" r="11.3" fill="none" stroke="#f0f0f0" stroke-width="1.4"/>
<circle cx="83.9" cy="204.4" r="11.3" fill="none" stroke="#a7353a" stroke-width="1.4" stroke-dasharray="4.44 4.44" stroke-dashoffset="2.2"/>
<path d="M83.9 197.4V202.2M83.9 206.6V211.4M76.9 204.4H81.7M86.1 204.4H90.9" stroke="#bcbcbc" stroke-width="1.2"/>
<!-- move -->
<g fill="#e6e6e6">
<path d="M83.9 233.4L87.2 238H80.6ZM83.9 256.2L87.2 251.6H80.6ZM72.5 244.8L77.1 241.5V248.1ZM95.3 244.8L90.7 241.5V248.1Z"/>
<rect x="82.9" y="239" width="2" height="2.6"/><rect x="82.9" y="248" width="2" height="2.6"/><rect x="78.1" y="243.8" width="2.6" height="2"/><rect x="87.1" y="243.8" width="2.6" height="2"/>
</g>
<!-- rotate -->
<g fill="none" stroke="#e2e2e2" stroke-width="1.2">
<path d="M76.6 274.4A9.2 9.2 0 0 1 91 273.6"/>
<path d="M91.2 284.8A9.2 9.2 0 0 1 76.8 285.6"/>
</g>
<path d="M83.9 275.6L87.6 279.6L83.9 283.6L80.2 279.6Z" fill="#a8a8a8"/>
<path d="M72.2 278.4H77.8L75 283.4ZM90 280.8H95.6L92.8 275.8Z" fill="#ececec"/>
<!-- scale -->
<path d="M75.7 313.6V306.4H92.5V322.7H85" fill="none" stroke="#c9c9c9" stroke-width="1.1"/>
<rect x="75.1" y="314.4" width="9" height="9.1" fill="#e8e8e8"/>
<path d="M85.4 313.6L90.2 308.8M87 308.6H90.4V312" stroke="#e8e8e8" stroke-width="1.2" fill="none"/>
<path d="M104 326V329.4H100.6Z" fill="#8a8a8a"/>
<!-- transform -->
<circle cx="83.9" cy="349.4" r="9.9" fill="none" stroke="#dedede" stroke-width="1.1" stroke-dasharray="9.5 6.05" stroke-dashoffset="-3"/>
<rect x="80" y="345.5" width="7.8" height="7.8" fill="#e8e8e8"/>
<path d="M83.9 338.6L86.3 342.2H81.5ZM83.9 360.2L86.3 356.6H81.5ZM73.1 349.4L76.7 347V351.8ZM94.7 349.4L91.1 347V351.8Z" fill="#e8e8e8"/>
<!-- annotate -->
<path d="M73.4 397.2C77 401.4 80.6 400 84 396.2S91.6 391.4 96.8 397.4" fill="none" stroke="#7fcfa2" stroke-width="1.4" stroke-linecap="round"/>
<g transform="translate(72.3 395.9) rotate(-43.6)"><path d="M0 0L3.2 -2V2Z" fill="#d8d8d8"/><rect x="4" y="-2" width="14.6" height="4" fill="#ececec"/><rect x="19.4" y="-2" width="2.8" height="4" fill="#ececec"/></g>
<path d="M104 401.6V405H100.6Z" fill="#8a8a8a"/>
<!-- measure -->
<path d="M80.4 433.2V420.7A12.5 12.5 0 0 1 92.9 433.2Z" fill="#8fdcb0"/>
<path d="M80.4 418.8A14.4 14.4 0 0 1 94.6 433" fill="none" stroke="#8fdcb0" stroke-width="1"/>
<path d="M74.8 413.2H80.6V433H95.8V436.8H75.6V414.2Z" fill="#e6e6e6"/>
<path d="M77.6 416V432M82 434.9H94" stroke="#9a9a9a" stroke-width="1.4" stroke-dasharray=".7 1.1"/>
<!-- add cube -->
<path d="M75.2 452.2V459.6M71.5 455.9H78.9" stroke="#7fcfa2" stroke-width="1.7"/>
<g fill="none" stroke="#7fcfa2" stroke-width="1.1" stroke-linejoin="round"><rect x="76.6" y="462.6" width="14.6" height="13.6"/><path d="M76.6 462.6L81.4 457.8H95.6L91.2 462.6M95.6 457.8V471.4L91.2 476.2"/></g>
<path d="M104 474V477.4H100.6Z" fill="#8a8a8a"/>
<!-- gizmo -->
<path d="M1194.3 194.3V170" stroke="#2f8df0" stroke-width="2"/>
<path d="M1194.3 194.3L1224.8 188.9" stroke="#73ab1c" stroke-width="2.4"/>
<path d="M1194.3 194.3L1205 209.5" stroke="#ee3b5a" stroke-width="2"/>
<circle cx="1184" cy="179.2" r="7" fill="rgba(150,50,60,.22)" stroke="#b53c4e" stroke-width="1.3"/>
<circle cx="1164.3" cy="200.1" r="7.7" fill="#56702c" stroke="#7cbc1c" stroke-width="1.5"/>
<circle cx="1194.8" cy="222" r="7.3" fill="#384960" stroke="#3c80d6" stroke-width="1.4"/>
<circle cx="1194.3" cy="166.7" r="8.4" fill="#2d8cf0"/>
<circle cx="1224.8" cy="188.9" r="8.4" fill="#70a41c"/>
<circle cx="1205" cy="209.5" r="8.7" fill="#f4385a"/>
<g font-family="Liberation Sans" font-size="10.8" text-anchor="middle" font-weight="bold">
<text x="1194.3" y="170.6" fill="#0c2c52">Z</text>
<text x="1224.8" y="192.8" fill="#20330a">Y</text>
<text x="1205" y="213.4" fill="#53101c">X</text>
</g>
<!-- sidebar toggle -->
<rect x="1236.6" y="159" width="8" height="13.4" rx="2" fill="#2f2f2f"/>
<path d="M1242.6 162.2L1239.4 165.6L1242.6 169" fill="none" stroke="#c8c8c8" stroke-width="1.3"/>
<!-- nav buttons -->
<g fill="#2b2b2b"><circle cx="1222" cy="249.4" r="13.6"/><circle cx="1222" cy="279.5" r="13.6"/><circle cx="1222" cy="309.4" r="13.6"/><circle cx="1222" cy="339.6" r="13.6"/></g>
<circle cx="1223.8" cy="247.8" r="6.2" fill="#e4e4e4"/>
<path d="M1219.4 252.4L1214.6 256.8" stroke="#e4e4e4" stroke-width="1.8" stroke-linecap="round"/>
<path d="M1223.8 244.2V251.4M1220.2 247.8H1227.4" stroke="#2b2b2b" stroke-width="1.2"/>
<!-- hand -->
<g fill="none" stroke="#e4e4e4" stroke-linecap="round" stroke-width="2.1">
<path d="M1217.4 281V274.6M1220.6 280V272.4M1223.9 280V272.6M1227 281.4V275"/>
</g>
<path d="M1216.4 279H1228V283C1228 286.6 1225.4 288.2 1222.2 288.2C1219.4 288.2 1217.6 287 1216 284.6L1213.8 281.2C1213.4 280.2 1214.4 279.4 1215.4 280.2L1216.4 281.4Z" fill="#e4e4e4"/>
<!-- camera -->
<g fill="#e4e4e4">
<circle cx="1217.8" cy="306" r="3.5"/><circle cx="1224.8" cy="305" r="4.4"/>
<rect x="1215" y="305.6" width="13" height="4.6" rx="1"/>
<rect x="1218.3" y="311.8" width="7.6" height="5.6" rx=".8"/>
<path d="M1227 314.6L1230.4 312.2V317Z"/><rect x="1216.4" y="313" width="1.2" height="3.2"/>
</g>
<circle cx="1217.8" cy="306.2" r="1.2" fill="#777"/><circle cx="1224.8" cy="305.2" r="1.4" fill="#777"/>
<!-- persp grid -->
<g fill="none" stroke="#e0e0e0" stroke-width="1.2" stroke-linejoin="round">
<path d="M1217.4 333.4H1226.8L1230 346.2H1214.2Z"/>
<path d="M1220.5 333.4L1219.4 346.2M1223.6 333.4L1224.8 346.2M1216.4 337.4H1227.8M1215.4 341.6H1228.8"/>
</g>
</svg>
<svg class="full" viewBox="0 0 1552 925">
<!-- editor type: 3d view -->
<g stroke="#d8d8d8" stroke-width="1.1" fill="none" stroke-linecap="round">
<path d="M69.9 105.5H75.6M68.8 109.4H83M73.7 103.2L71.5 112.6M79.6 106.4L80.4 112.6"/>
</g>
<circle cx="79.6" cy="102.4" r="3.6" fill="#e8e8e8"/><path d="M77.6 101.6Q78.2 100.2 79.6 99.9" stroke="#888" stroke-width=".8" fill="none"/>
<use href="#chev" x="84.4" y="101.9" width="10" height="10"/>
<!-- object mode icon -->
<rect x="109.9" y="102" width="8.2" height="7.8" fill="#e4e4e4"/>
<path d="M107.1 102.6V99.3H110.6M117.4 99.3H120.9V102.6M120.9 109.2V112.5H117.4M110.6 112.5H107.1V109.2" stroke="#a2a2a2" stroke-width="1.1" fill="none"/>
<use href="#chev" x="199.3" y="102" width="10" height="10"/>
<!-- select mode icons -->
<rect x="103.6" y="125.5" width="13.2" height="13.2" fill="none" stroke="#f4f4f4" stroke-width="1.3" stroke-dasharray="1.8 1.6 1.8 2.8 1.8 1.6 1.8 0"/>
<g fill="#c9c9c9">
<rect x="126" y="125" width="10.1" height="9.9"/><rect x="121.9" y="129.1" width="10.3" height="9.6"/>
<path d="M145 125H155V135H149.9V130H145Z"/>
<path d="M164.1 125H174.2V134.9H170.1V129.1H164.1ZM160 129.1H164.1V134.9H170.1V138.7H160Z"/>
<rect x="183.2" y="129.1" width="5.9" height="5.8"/>
</g>
<path d="M141.3 131.7V130H143.1M141.3 133.5V135.3M141.3 137.1V138.7H143.1M145.3 138.7H147.1M149.3 138.7H151V137" fill="none" stroke="#e0e0e0" stroke-width="1.2"/>
<path d="M183 126.9V125.3H184.8M187 125.3H188.9M191.2 125.3H192.9V127M192.9 129.2V131M192.9 133.3V135H191.3M179.3 131.6V130H181.1M179.3 133.6V135.4M179.3 137.2V138.7H181.1M183.4 138.7H185.2M187.4 138.7H189.1V137.1" fill="none" stroke="#e0e0e0" stroke-width="1.2"/>
<!-- orientation -->
<g stroke="#dcdcdc" stroke-width="1.1" fill="none" stroke-linecap="round" stroke-linejoin="round">
<circle cx="531.9" cy="110.1" r="1.6"/>
<path d="M531.7 108.4V99.6M529.5 101.8L531.7 99.4L533.9 101.8M533.6 110.3H542.2M540 108.1L542.4 110.3L540 112.5"/>
<path d="M533.2 108.8L539.2 102.6M536.6 102.4H539.4V105.2" stroke="#8c8c8c" stroke-width="1"/>
</g>
<use href="#chev" x="592.3" y="101.9" width="10" height="10"/>
<!-- pivot -->
<g stroke="#dcdcdc" stroke-width="1.2" fill="none" stroke-linecap="round">
<path d="M619.6 102.9A4.1 4.1 0 1 1 624.1 107.4"/>
<path d="M622.4 109.1A4.1 4.1 0 1 1 617.9 104.6"/>
</g>
<circle cx="621.4" cy="105.6" r="1.4" fill="#f0f0f0"/>
<use href="#chev" x="629.4" y="101.9" width="10" height="10"/>
<!-- snap magnet -->
<g transform="translate(656.6 105.4) rotate(45)" stroke="#a8a8a8" stroke-width="1" fill="none" stroke-linejoin="round">
<path d="M-5.4 5.2V-.6A5.4 5.4 0 0 1 5.4 -.6V5.2H2.6V-.6A2.6 2.6 0 0 0 -2.6 -.6V5.2Z"/>
</g>
<rect x="669.4" y="100" width="12.2" height="11.8" fill="#e2e2e2"/>
<use href="#chev" x="686.2" y="102" width="10" height="10"/>
<!-- proportional -->
<circle cx="712.9" cy="106" r="6.4" fill="none" stroke="#858585" stroke-width="1"/>
<circle cx="712.9" cy="106" r="2.1" fill="#cfcfcf"/>
<path d="M727.2 111.4C731.4 111.2 731.6 100.4 734 100.4S736.6 111.2 740.8 111.4" stroke="#a4a4a4" stroke-width="1.1" fill="none" stroke-linecap="round"/>
<g opacity=".35"><use href="#chev" x="743.2" y="102" width="10" height="10"/></g>
<!-- visibility -->
<path d="M994 102.4C996 99.6 997.9 99 999.6 99S1003.2 99.6 1005.2 102.4C1003.2 105.2 1001.3 105.8 999.6 105.8S996 105.2 994 102.4Z" fill="#e6e6e6"/>
<circle cx="999.6" cy="102.4" r="2.3" fill="#282828"/><circle cx="999.6" cy="102.4" r="1.2" fill="#e6e6e6"/>
<path d="M991 105L999 108.6L995.8 109.8L994.4 113Z" fill="#e6e6e6"/>
<use href="#chev" x="1008.3" y="102" width="10" height="10"/>
<!-- gizmo -->
<g stroke="#f2f2f2" stroke-width="1.2" fill="none" stroke-linecap="round" stroke-linejoin="round">
<path d="M1028.3 101.5C1035 102.2 1039 106.6 1039.4 112.6"/>
<circle cx="1029.9" cy="111.1" r="1.6"/>
<path d="M1031.2 109.8L1041.3 99.8M1037.6 99.6H1041.6V103.6"/>
</g>
<use href="#chev" x="1049.2" y="102" width="10" height="10"/>
<!-- overlay -->
<circle cx="1077.8" cy="108.2" r="4.6" fill="none" stroke="#f2f2f2" stroke-width="1.2"/>
<circle cx="1082.3" cy="103.8" r="5.6" fill="#4772b3"/>
<circle cx="1082.3" cy="103.8" r="4.9" fill="#f6f6f6"/>
<path d="M1078.4 104.2Q1079 107.4 1082.4 108" stroke="#4772b3" stroke-width="1" fill="none"/>
<use href="#chev" x="1094" y="102" width="10" height="10"/>
<!-- xray -->
<g stroke="#dedede" stroke-width="1.1" fill="none">
<path d="M1122.3 102.2V99.3H1131.5V108.6H1129"/>
<rect x="1118.4" y="102.5" width="10.3" height="10"/>
<path d="M1122.4 104.6V106.2M1122.4 107.6V108.9H1123.6M1125 108.9H1126.6" stroke-width="1"/>
</g>
<!-- shading -->
<g stroke="#cfcfcf" stroke-width="1" fill="none">
<circle cx="1150" cy="106" r="6.6"/><path d="M1150 99.4V112.6M1143.8 103.6H1156.2M1143.8 108.4H1156.2"/>
<circle cx="1188" cy="106" r="6.6"/>
<circle cx="1207" cy="106" r="6.6"/>
<path d="M1203 103.8Q1204.2 101.8 1206.4 101.2" stroke-width="1.3" stroke-linecap="round"/>
</g>
<circle cx="1168.9" cy="106" r="7" fill="#ffffff"/>
<path d="M1188 106V99.4A6.6 6.6 0 0 0 1181.6 107.6Z" fill="#c4c4c4"/>
<path d="M1188 106L1193 110.4" stroke="#cfcfcf" stroke-width="1"/>
<path d="M1204.4 111.6L1210.8 108.4" stroke="#9a9a9a" stroke-width="1.6" stroke-dasharray="1 1"/>
<use href="#chev" x="1221.1" y="102" width="10" height="10"/>
<use href="#chev" x="1225.6" y="127" width="10" height="10"/>
</svg>
</div>
<div id="ned" class="abs" style="left:0;top:0;width:1552px;height:925px;clip-path:inset(481px 308px 95.2px 57.6px round 6px);background:#1e1e1e">
<svg class="full" viewBox="0 0 1552 925">
<defs><pattern id="dots" x="61.2" y="513.7" width="25.567" height="25.58" patternUnits="userSpaceOnUse"><rect x="0" y="0" width="2.6" height="2.6" rx=".7" fill="#2e2e2e"/></pattern></defs>
<rect x="56" y="507" width="1188" height="322" fill="url(#dots)"/>
</svg>
<div class="abs" style="left:56px;top:481px;width:1188px;height:26px;background:#212121"></div>
<div class="btn" style="left:64px;top:484px;width:31.5px;height:19.6px"></div>
<div class="t" style="left:108.5px;top:486.5px">View</div>
<div class="t" style="left:148.7px;top:486.5px;letter-spacing:-.15px">Select</div>
<div class="t" style="left:196px;top:486.5px;letter-spacing:-.2px">Add</div>
<div class="t" style="left:232px;top:486.5px;letter-spacing:-.1px">Node</div>
<div class="btn" style="left:550.8px;top:484px;width:151.8px;height:19.6px;overflow:hidden"><div class="abs" style="left:31.2px;top:-1px;width:121px;height:20px;background:#545454"></div></div>
<div class="t" style="left:639.6px;top:486.5px;color:#e6e6e6;letter-spacing:-.3px">New</div>
<div class="abs" style="left:1116.5px;top:484.5px;width:18.5px;height:19px;border-radius:4px;background:#363636"></div>
<div class="btn" style="left:1141px;top:484px;width:51.5px;height:19.5px;overflow:hidden"><div class="abs" style="left:-1px;top:-1px;width:19px;height:20px;background:#545454"></div></div>
<div class="btn" style="left:1198px;top:484px;width:39.5px;height:19.5px;overflow:hidden"><div class="abs" style="left:-1px;top:-1px;width:19px;height:20px;background:#4772b3"></div></div>
<svg class="full" viewBox="0 0 1552 925">
<!-- editor type icon -->
<g id="ntico"><rect x="70.6" y="487.5" width="7.6" height="5.4" rx="1.3" fill="#e6e6e6"/><rect x="68.4" y="495.2" width="8" height="5.8" rx="1.3" fill="#e6e6e6"/><path d="M71.8 491.2H77M69.6 499.2H75.2" stroke="#666" stroke-width=".8"/><path d="M79 489.4C81.4 489.8 82 491.6 82 494.4S81.2 498.4 78 498.6" fill="none" stroke="#cfcfcf" stroke-width="1"/><path d="M79.4 497.2L77.6 498.6L79.4 500M79 488.2L80.4 489.6L79 491" fill="none" stroke="#cfcfcf" stroke-width=".9"/></g>
<use href="#chev" x="84.4" y="489.2" width="10" height="10"/>
<use href="#ntico" x="487.8" y="0"/>
<use href="#chev" x="571.3" y="489.2" width="10" height="10"/>
<path d="M594.5 489V498.2M589.9 493.6H599.1" stroke="#e8e8e8" stroke-width="1.2"/>
<!-- pin -->
<g stroke="#c4c4c4" stroke-width="1.1" fill="none" stroke-linejoin="round" stroke-linecap="round"><path d="M711.8 500.4L716.2 496"/><path d="M719.6 487.4L724.6 492.4L722.8 493L720.6 497L718.6 498.4L713.8 493.6L715.2 491.6L719.2 489.4Z"/></g>
<!-- parent tree -->
<path d="M1122.4 492L1125.6 488.2L1128.8 492M1125.6 488.6V497.4C1125.6 498.6 1126.2 499.4 1127.4 499.4H1131.2" fill="none" stroke="#6c6c6c" stroke-width="1.1" stroke-linecap="round" stroke-linejoin="round"/>
<!-- snap -->
<g transform="translate(1150.8 493.4) rotate(45)" stroke="#a8a8a8" stroke-width="1" fill="none" stroke-linejoin="round"><path d="M-5.2 5V-.6A5.2 5.2 0 0 1 5.2 -.6V5H2.5V-.6A2.5 2.5 0 0 0 -2.5 -.6V5Z"/></g>
<rect x="1165.4" y="488.2" width="4.6" height="4.6" fill="#e4e4e4"/>
<path d="M1168 488V501M1175.2 487.6V501M1164.4 491H1179M1164.4 497.6H1179" stroke="#cfcfcf" stroke-width="1.1"/>
<use href="#chev" x="1180.6" y="489.6" width="10" height="10"/>
<!-- overlay -->
<circle cx="1205.4" cy="496.2" r="4.5" fill="none" stroke="#f2f2f2" stroke-width="1.2"/>
<circle cx="1209.8" cy="491.8" r="5.5" fill="#4772b3"/><circle cx="1209.8" cy="491.8" r="4.8" fill="#f6f6f6"/>
<path d="M1206 492.2Q1206.6 495.4 1210 496" stroke="#4772b3" stroke-width="1" fill="none"/>
<use href="#chev" x="1221.6" y="489.6" width="10" height="10"/>
<!-- region toggles -->
<rect x="56" y="521" width="7" height="13.4" rx="2" fill="#242424"/>
<use href="#chevr" x="54.4" y="522.6" width="10" height="10"/>
<rect x="1237" y="521" width="8" height="13.4" rx="2" fill="#242424"/>
<path d="M1242.4 524.4L1239.2 527.7L1242.4 531" fill="none" stroke="#c8c8c8" stroke-width="1.3"/>
</svg>
</div>
<!-- highlight rectangle -->
<div class="abs" style="left:538px;top:470.8px;width:204px;height:43.4px;border:2.7px solid #ee4126"></div>
<div id="outl" class="abs" style="left:0;top:0;width:1552px;height:925px;clip-path:inset(93.2px 57.3px 624.2px 1247.4px round 6px);background:#282828">
<div class="abs" style="left:1247px;top:93px;width:250px;height:26.5px;background:#2b2b2b"></div>
<div class="abs" style="left:1247px;top:139.8px;width:250px;height:19.9px;background:#2b2b2b"></div>
<div class="abs" style="left:1247px;top:179.1px;width:250px;height:19.9px;background:#334b80"></div>
<div class="abs" style="left:1247px;top:219.4px;width:250px;height:19.9px;background:#2b2b2b"></div>
<div class="abs" style="left:1247px;top:259.2px;width:250px;height:19.9px;background:#2b2b2b"></div>
<div class="btn" style="left:1254.5px;top:96.3px;width:31.3px;height:19.2px"></div>
<div class="btn" style="left:1291.8px;top:96.3px;width:31.4px;height:19.2px"></div>
<div class="fld" style="left:1339.8px;top:96.3px;width:115.7px;height:19.2px"></div>
<div class="btn" style="left:1472.5px;top:96.5px;width:32px;height:19px"></div>
<div class="abs" style="left:1276px;top:164px;width:1px;height:90px;background:#494949"></div>
<div class="abs" style="left:1287px;top:140.2px;width:19.6px;height:17.8px;border-radius:4px;background:#4b4b4b;border:1px solid #6b6b6b"></div>
<div class="abs" style="left:1307.2px;top:180.2px;width:19.6px;height:17.8px;border-radius:4px;background:#62749e;border:1px solid #7a8bb2"></div>
<div class="abs" style="left:1393px;top:160.4px;width:19.6px;height:17.8px;border-radius:4px;background:#4b4b4b;border:1px solid #5c5c5c"></div>
<div class="t" style="left:1290.8px;top:123px;color:#d8d8d8;letter-spacing:-.1px">Scene Collection</div>
<div class="t" style="left:1311px;top:142.6px;color:#dedede;letter-spacing:.05px">Collection</div>
<div class="t" style="left:1331px;top:162.5px;color:#848484;letter-spacing:.1px">Camera</div>
<div class="t" style="left:1331px;top:182.4px;color:#f2a431">Donut</div>
<div class="t" style="left:1331px;top:202.3px;color:#e0e0e0">Icing</div>
<div class="t" style="left:1331px;top:222.2px;color:#e0e0e0;letter-spacing:.2px">Light</div>
<div class="t" style="left:1331px;top:242.1px;color:#848484">Plane</div>
<svg class="full" viewBox="0 0 1552 925">
<!-- header icons -->
<g fill="#e2e2e2"><rect x="1259.3" y="99.1" width="5.5" height="3" rx=".5"/><rect x="1266.4" y="104.9" width="7.1" height="3.1" rx=".5"/><rect x="1266.4" y="110" width="7.1" height="3.1" rx=".5"/></g>
<path d="M1261.6 102.4V111.6H1266M1261.6 106.4H1266" stroke="#b4b4b4" stroke-width="1.1" fill="none"/>
<use href="#chev" x="1274.8" y="101.8" width="10" height="10"/>
<g id="vlico"><path d="M1296.6 104.8V112.8H1306.2" stroke="#8e8e8e" stroke-width="1.1" fill="none"/><path d="M1298.6 102.8V110.9H1308.2" stroke="#ababab" stroke-width="1.1" fill="none"/><rect x="1300.7" y="99.4" width="10" height="9.7" rx=".6" fill="#262626" stroke="#e2e2e2" stroke-width="1.3"/><path d="M1301.4 108.5L1304.6 102.6L1306.8 105.8L1307.8 104.6L1310 108.5Z" fill="#e8e8e8"/><circle cx="1308.6" cy="101.9" r=".9" fill="#e8e8e8"/></g>
<use href="#chev" x="1311.7" y="101.8" width="10" height="10"/>
<g id="mag"><circle cx="1353.4" cy="103.6" r="3.9" fill="none" stroke="#dcdcdc" stroke-width="1.2"/><path d="M1350.6 106.6L1346.2 111.6" stroke="#dcdcdc" stroke-width="1.3" stroke-linecap="round"/></g>
<path d="M1477 100H1490L1485 106.2V112.4L1482 110.8V106.2Z" fill="none" stroke="#dcdcdc" stroke-width="1.2" stroke-linejoin="round"/>
<path d="M1494.4 106.4h1.6" stroke="#bbb" stroke-width="1.2"/>
<!-- row icons -->
<g fill="#dcdcdc"><use href="#box" x="1269.2" y="121.6" width="16" height="16"/><use href="#box" x="1288.9" y="141.2" width="16" height="16"/></g>
<path d="M1272.8 147.2H1280.2L1276.5 153.2Z" fill="#d4d4d4"/>
<g fill="#8a8a8a"><path d="M1294 165.8V172.8L1299.8 169.3Z"/><path d="M1294 245.4V252.4L1299.8 248.9Z"/></g>
<g fill="#d4d4d4"><path d="M1294 185.7V192.7L1299.8 189.2Z"/><path d="M1294 205.6V212.6L1299.8 209.1Z"/><path d="M1294 225.5V232.5L1299.8 229Z"/></g>
<!-- camera obj icon (dim orange) -->
<g fill="#a0683c"><circle cx="1313.2" cy="166.2" r="3"/><circle cx="1320" cy="165.4" r="3.8"/><rect x="1311" y="166" width="12" height="3.6" rx=".8"/><rect x="1313.6" y="171" width="7" height="4.8" rx=".7"/><path d="M1321.6 173.4L1324.8 171.2V175.6Z"/><rect x="1311.8" y="172" width="1.1" height="2.8"/></g>
<circle cx="1313.2" cy="166.3" r="1" fill="#282828"/><circle cx="1320" cy="165.5" r="1.2" fill="#282828"/>
<g stroke="#e58d47"><use href="#tri" x="1309" y="181.1" width="16" height="16"/><use href="#tri" x="1309" y="201" width="16" height="16"/></g>
<g stroke="#8c5a36"><use href="#tri" x="1309" y="240.8" width="16" height="16"/></g>
<!-- light bulb -->
<path d="M1317 222A5.6 5.6 0 0 0 1313.4 231.8V233.4H1320.6V231.8A5.6 5.6 0 0 0 1317 222Z" fill="#e58d47"/>
<rect x="1314.2" y="234.2" width="5.6" height="1.3" fill="#e58d47"/><path d="M1315.4 236.2H1318.6L1317 237.6Z" fill="#e58d47"/>
<path d="M1314.6 227.4L1315.6 229.6V231.4M1319.4 227.4L1318.4 229.6V231.4M1315.2 228.4H1318.8" stroke="#282828" stroke-width=".9" fill="none"/>
<!-- data icons -->
<g fill="none" stroke="#1fa585"><use href="#mesh" x="1404.5" y="181.2" width="16" height="16"/></g>
<g fill="none" stroke="#1fa585"><use href="#mesh" x="1378" y="201.2" width="16" height="16"/></g>
<g fill="none" stroke="#167a62"><use href="#mesh" x="1382.4" y="241" width="16" height="16"/></g>
<circle cx="1386.5" cy="228" r="5.8" fill="none" stroke="#1fa585" stroke-width="1.2"/><circle cx="1386.5" cy="228.6" r="1.3" fill="#1fa585"/><path d="M1386.5 230V236" stroke="#1fa585" stroke-width="1.1" stroke-dasharray="1.4 1"/>
<!-- camera data icon -->
<g fill="none" stroke="#1e9c7e" stroke-width="1.1"><circle cx="1399.6" cy="166.4" r="2.4"/><circle cx="1405.6" cy="165.8" r="3"/><rect x="1399.6" y="170.6" width="6.6" height="4.4" rx=".7"/><path d="M1407 172.8L1409.6 171V174.6ZM1397.2 167.6V169.6H1408.4"/></g>
<!-- wrench -->
<path d="M1386.6 194.4L1391.4 189.6A3.4 3.4 0 0 1 1395.4 185.2L1393.4 187.4L1394.4 189.2L1396.4 189.8L1398.2 187.8A3.4 3.4 0 0 1 1393.6 191.8L1388.8 196.6A1.5 1.5 0 0 1 1386.6 194.4Z" fill="none" stroke="#5d8fe8" stroke-width="1.2" stroke-linejoin="round"/>
<!-- checkbox -->
<rect x="1432" y="143.9" width="11.4" height="11.4" rx="1.6" fill="#e6e6e6"/>
<path d="M1434.4 149.6L1437 152.2L1441.4 146.8" stroke="#1e1e1e" stroke-width="1.6" fill="none"/>
<!-- eyes/cams -->
<use href="#eye" x="1449.8" y="141.5" width="16" height="16"/>
<use href="#eye" x="1449.8" y="181.2" width="16" height="16"/>
<use href="#eye" x="1449.8" y="201.1" width="16" height="16"/>
<use href="#eye" x="1449.8" y="221" width="16" height="16"/>
<path d="M1451.6 168.4Q1457.8 174.4 1464 168.4" stroke="#cfcfcf" stroke-width="1.1" fill="none"/>
<path d="M1451.6 248Q1457.8 254 1464 248" stroke="#cfcfcf" stroke-width="1.1" fill="none"/>
<use href="#cam" x="1470" y="141" width="16" height="16"/>
<use href="#cam" x="1470" y="160.8" width="16" height="16"/>
<use href="#cam" x="1470" y="180.7" width="16" height="16"/>
<use href="#cam" x="1470" y="200.6" width="16" height="16"/>
<use href="#cam" x="1470" y="220.5" width="16" height="16"/>
<use href="#cam" x="1470" y="240.4" width="16" height="16"/>
</svg>
</div>
<div id="prp" class="abs" style="left:0;top:0;width:1552px;height:925px;clip-path:inset(304.4px 57.3px 95.2px 1247.4px round 6px);background:#303030">
<div class="abs" style="left:1247px;top:329.5px;width:28.4px;height:501px;background:#1d1d1d"></div>
<div class="abs" style="left:1249.6px;top:586.6px;width:27px;height:25.4px;border-radius:4px 0 0 4px;background:#303030"></div>
<div class="btn" style="left:1254.8px;top:306.5px;width:31.6px;height:19.4px"></div>
<div class="fld" style="left:1314px;top:306.5px;width:116px;height:19.4px"></div>
<div class="btn" style="left:1468px;top:306.5px;width:19.2px;height:19.4px"></div>
<div class="t" style="left:1309.6px;top:340.5px;letter-spacing:-.1px">Donut</div>
<div class="t" style="left:1391px;top:340.5px;letter-spacing:-.15px">Subdivision</div>
<div class="btn" style="left:1284px;top:374px;width:203.6px;height:18.5px;background:#282828"></div>
<div class="t" style="left:1291.6px;top:376.2px;letter-spacing:-.12px">Add Modifier</div>
<!-- modifier panel -->
<div class="abs" style="left:1283.6px;top:403.7px;width:204px;height:155.8px;border-radius:4px;background:#3c3c3c;border:1.2px solid #3c6cb8"></div>
<div class="abs" style="left:1338.4px;top:407.4px;width:97.8px;height:18.4px;border-radius:4px;overflow:hidden;background:#222">
 <div class="abs" style="left:0;top:0;width:18.8px;height:18.4px;background:#4b4b4b"></div>
 <div class="abs" style="left:19.7px;top:0;width:18.8px;height:18.4px;background:#4772b3"></div>
 <div class="abs" style="left:39.4px;top:0;width:18.8px;height:18.4px;background:#4772b3"></div>
 <div class="abs" style="left:59.1px;top:0;width:18.9px;height:18.4px;background:#4772b3"></div>
</div>
<div class="abs" style="left:1292.4px;top:437.6px;width:186.2px;height:18.2px;border-radius:4px;overflow:hidden;background:#545454"><div class="abs" style="left:0;top:0;width:92.2px;height:18.2px;background:#4772b3"></div></div>
<div class="t" style="left:1302px;top:439.6px;color:#fff;letter-spacing:-.1px">Catmull-Clark</div>
<div class="t" style="left:1413px;top:439.6px;letter-spacing:-.1px">Simple</div>
<div class="abs" style="left:1364.7px;top:462.4px;width:93.8px;height:38.2px;border-radius:4px;background:#545454"></div>
<div class="abs" style="left:1364.7px;top:480.8px;width:93.8px;height:1px;background:#3a3a3a"></div>
<div class="t" style="left:1292.6px;top:464.4px;letter-spacing:-.25px">Levels Vie...</div>
<div class="t" style="left:1316.6px;top:484px;letter-spacing:-.25px">Render</div>
<div class="t" style="left:1408px;top:464.4px">1</div>
<div class="t" style="left:1407.6px;top:484px">2</div>
<div class="abs" style="left:1364.7px;top:510.6px;width:11.6px;height:11.6px;border-radius:2px;background:#4772b3"></div>
<div class="t" style="left:1381.4px;top:509.4px;letter-spacing:-.2px">Optimal Dis...</div>
<div class="t" style="left:1319.4px;top:540px;letter-spacing:-.1px">Advanced</div>
<svg class="full" viewBox="0 0 1552 925">
<!-- header icons -->
<rect x="1260.4" y="309.8" width="13.4" height="5.4" rx="2.7" fill="#222" stroke="#a8a8a8" stroke-width="1"/><path d="M1263.1 309.8H1266.4V315.2H1263.1A2.7 2.7 0 0 1 1263.1 309.8Z" fill="#e6e6e6"/>
<rect x="1260.4" y="317.9" width="13.4" height="5.4" rx="2.7" fill="#222" stroke="#a8a8a8" stroke-width="1"/><path d="M1263.1 317.9H1269.4V323.3H1263.1A2.7 2.7 0 0 1 1263.1 317.9Z" fill="#e6e6e6"/>
<use href="#chev" x="1275.3" y="312.2" width="10" height="10"/>
<use href="#mag" x="-25.8" y="211"/>
<use href="#chev" x="1472.8" y="312" width="10" height="10"/>
<!-- breadcrumbs -->
<rect x="1289.4" y="343.4" width="8.4" height="8" fill="#e4e4e4"/>
<path d="M1286.6 344V340.8H1290M1297.2 340.8H1300.6V344M1300.6 350.8V354H1297.2M1290 354H1286.6V350.8" stroke="#a2a2a2" stroke-width="1.1" fill="none"/>
<use href="#chevr" x="1350.4" y="342.4" width="10" height="10"/>
<g id="modico"><rect x="1368.2" y="340.8" width="13" height="13.2" rx="1" fill="none" stroke="#a8a8a8" stroke-width="1"/><circle cx="1374.7" cy="347.4" r="4.3" fill="none" stroke="#e2e2e2" stroke-width="1.3"/></g>
<g stroke="#c4c4c4" stroke-width="1.1" fill="none" stroke-linejoin="round" stroke-linecap="round"><path d="M1471 354.2L1475.4 349.8"/><path d="M1478.8 341.2L1483.8 346.2L1482 346.8L1479.8 350.8L1477.8 352.2L1473 347.4L1474.4 345.4L1478.4 343.2Z"/></g>
<use href="#chev" x="1475.6" y="378.6" width="10" height="10"/>
<!-- panel header -->
<path d="M1292 414.2L1296 418.2L1300 414.2" fill="none" stroke="#cfcfcf" stroke-width="1.2" stroke-linecap="round" stroke-linejoin="round"/>
<use href="#modico" x="-61.2" y="69"/>
<g fill="none" stroke="#e0e0e0"><use href="#mesh" x="1340" y="408.4" width="16" height="16"/></g>
<g fill="none" stroke="#f2f2f2" stroke-width="1"><rect x="1362.6" y="411.6" width="9.4" height="9.4" stroke-dasharray="0"/><g fill="#4772b3"><rect x="1361" y="410" width="3.2" height="3.2" rx=".8"/><rect x="1361" y="419.4" width="3.2" height="3.2" rx=".8"/><rect x="1370.4" y="419.4" width="3.2" height="3.2" rx=".8"/></g><rect x="1370" y="409.6" width="4" height="4" fill="#fff" stroke="none"/></g>
<rect x="1381.2" y="410.6" width="11.6" height="8.4" rx="1.2" fill="#f2f2f2"/><rect x="1383" y="412.4" width="8" height="2.2" fill="#4772b3" opacity=".9"/><path d="M1383.6 421.8H1390.4M1387 419V421.6" stroke="#f2f2f2" stroke-width="1.3"/>
<g fill="#f6f6f6"><path d="M1400.6 412.6H1403.8L1404.8 410.8H1409.2L1410.2 412.6H1413.4V421.8H1400.6Z"/></g><circle cx="1407" cy="417" r="3.5" fill="#4772b3"/><circle cx="1407" cy="417" r="2.4" fill="none" stroke="#f6f6f6" stroke-width="1.1"/>
<use href="#chev" x="1421.6" y="412" width="10" height="10"/>
<path d="M1443.6 412.6L1451 420M1451 412.6L1443.6 420" stroke="#dcdcdc" stroke-width="1.3" stroke-linecap="round"/>
<path d="M1470 414.6H1481.6M1470 417.8H1481.6" stroke="#6c6c6c" stroke-width="1.3" stroke-dasharray="1.3 1.27"/>
<!-- dots -->
<g fill="#dedede"><circle cx="1469.4" cy="471.3" r="1.6"/><circle cx="1469.4" cy="491" r="1.6"/><circle cx="1469.4" cy="516.4" r="1.6"/></g>
<path d="M1367 516.6L1369.6 519.2L1374.2 513.4" stroke="#fff" stroke-width="1.5" fill="none" stroke-linecap="round" stroke-linejoin="round"/>
<use href="#chevr" x="1305.4" y="542" width="10" height="10"/>
</svg>
<svg class="full" viewBox="0 0 1552 925">
<!-- tool -->
<g stroke="#c6c6c6" fill="none" stroke-linecap="round"><path d="M1257.8 344.8V351" stroke-width="1.1"/><path d="M1266.4 350V356.8" stroke-width="2.2"/><path d="M1263.8 345.2V347.6A2.6 2.6 0 0 0 1269 347.6V345.2" stroke-width="1.5"/></g>
<rect x="1255.6" y="351.2" width="4.4" height="6.4" rx="2" fill="#c6c6c6"/>
<!-- render -->
<g fill="none" stroke="#c6c6c6" stroke-width="1.2"><rect x="1255.9" y="383.6" width="13.6" height="9.6" rx="1.2"/><path d="M1259 383.4L1260 381H1264L1265 383.4"/></g>
<path d="M1266.4 386.2V387.8M1266.4 389.4V391" stroke="#c6c6c6" stroke-width="1.2"/><path d="M1267.4 381.6h1.6" stroke="#c6c6c6" stroke-width="1"/>
<!-- output -->
<rect x="1255.6" y="408.6" width="14.2" height="3.4" rx=".8" fill="#c6c6c6"/>
<path d="M1256.2 413.4V416.6H1258.2M1269.2 413.4V416.6H1267.2" stroke="#c6c6c6" stroke-width="1.1" fill="none"/>
<rect x="1258.6" y="413.6" width="8.2" height="8.8" fill="#bdbdbd"/><path d="M1259.8 421L1262.6 417L1264 418.8L1265.6 421Z" fill="#2a2a2a"/><circle cx="1264.8" cy="415.8" r=".8" fill="#2a2a2a"/>
<!-- view layer -->
<path d="M1256 447.4V450.4H1266.4" stroke="#8e8e8e" stroke-width="1.2" fill="none"/><path d="M1257.6 445.6V448.6H1268" stroke="#aaa" stroke-width="1.2" fill="none"/>
<rect x="1259.2" y="436.6" width="10.6" height="10.4" rx=".8" fill="#c8c8c8"/><path d="M1260.4 445.6L1263.6 440.6L1265.6 443.4L1266.8 442L1268.8 445.6Z" fill="#2a2a2a"/><circle cx="1267.4" cy="439.2" r=".9" fill="#2a2a2a"/>
<!-- scene -->
<path d="M1259.8 464.2L1263.6 475.4H1256Z" fill="#b4b4b4"/><circle cx="1267.8" cy="466.2" r="1.9" fill="#d6d6d6"/>
<circle cx="1265.8" cy="474.2" r="3.7" fill="#1c1c1c" stroke="#d0d0d0" stroke-width="1.2"/><path d="M1264 473.2Q1265 471.8 1266.6 472" stroke="#888" stroke-width=".8" fill="none"/>
<!-- world -->
<circle cx="1262.5" cy="499.7" r="6.6" fill="none" stroke="#c44f5e" stroke-width="1.3"/>
<path d="M1259 496L1261.8 494.8L1263 496.8L1261.4 498.6L1259.4 498.4ZM1262.6 500.4L1265.8 500.8L1266.6 502.6L1264.4 504.8L1262.4 503.6Z" fill="#c44f5e"/>
<path d="M1255.6 506L1269.6 493" stroke="#c44f5e" stroke-width="1"/>
<!-- collection -->
<g fill="none" stroke="#c8c8c8" stroke-width="1.2"><rect x="1255.8" y="529.6" width="13.8" height="3.4" rx=".8"/><path d="M1256.8 533.4V542.2H1268.6V533.4"/></g><rect x="1260.6" y="535.8" width="4" height="1.6" rx=".8" fill="#c8c8c8"/>
<!-- object -->
<rect x="1258.7" y="567.5" width="8" height="8.1" fill="#e2934c"/>
<path d="M1256 568V564.8H1259.2M1266.2 564.8H1269.4V568M1269.4 575.2V578.4H1266.2M1259.2 578.4H1256V575.2" stroke="#8a5a34" stroke-width="1.1" fill="none"/>
<!-- modifiers wrench -->
<path d="M1256.8 603.4L1261.8 598.4A3.7 3.7 0 0 1 1266.2 593.6L1264 596L1265 598L1267.2 598.6L1269.2 596.4A3.7 3.7 0 0 1 1264.2 600.8L1259.2 605.8A1.7 1.7 0 0 1 1256.8 603.4Z" fill="#6d9eff"/>
<!-- particles -->
<g stroke="#5b7bc8" stroke-width="1.1" fill="#5b7bc8"><path d="M1258 622.6V632M1258 622.6H1268M1258 622.6L1267.6 632.2" fill="none"/><circle cx="1258" cy="622.6" r="2.2"/><circle cx="1268.2" cy="622.6" r="1.2"/><circle cx="1258" cy="632.2" r="1.2"/><circle cx="1267.8" cy="632.4" r="1.6"/></g>
<!-- physics -->
<path d="M1267.6 659.6A6.6 6.6 0 1 1 1265.6 650.2" fill="none" stroke="#5b7bc8" stroke-width="1.2"/><circle cx="1262.4" cy="655.8" r="2.7" fill="#6a8ee0"/><circle cx="1267.8" cy="650.6" r="1.7" fill="#6a8ee0"/>
<!-- constraints -->
<path d="M1256.6 684.4C1257 681 1259.6 679.4 1263 678.4L1267.4 677.2C1269.2 677 1269.8 678.4 1269.4 679.8L1267.8 684.6C1266.6 688 1264.6 690.6 1261 690.4C1258 690.2 1256.4 687.6 1256.6 684.4Z" fill="none" stroke="#6a8ee0" stroke-width="1.2"/><circle cx="1261.4" cy="685.4" r="2.5" fill="none" stroke="#6a8ee0" stroke-width="1.3"/><circle cx="1266.6" cy="680" r=".8" fill="#6a8ee0"/>
<!-- data -->
<g fill="none" stroke="#1fa678"><use href="#mesh" x="1254.6" y="703.8" width="16" height="16"/></g>
<!-- material -->
<circle cx="1262.5" cy="739.3" r="6.5" fill="none" stroke="#c8565f" stroke-width="1.3"/><path d="M1262.5 739.3V732.8A6.5 6.5 0 0 0 1256 739.3Z" fill="#c8565f"/><path d="M1262.5 739.3H1269A6.5 6.5 0 0 1 1262.5 745.8Z" fill="#c8565f"/>
<!-- texture -->
<g fill="#c8565f"><rect x="1255.6" y="768.6" width="14" height="14" opacity=".35"/>
<path d="M1255.6 768.6h3.5v3.5h-3.5zM1262.6 768.6h3.5v3.5h-3.5zM1259.1 772.1h3.5v3.5h-3.5zM1266.1 772.1h3.5v3.5h-3.5zM1255.6 775.6h3.5v3.5h-3.5zM1262.6 775.6h3.5v3.5h-3.5zM1259.1 779.1h3.5v3.5h-3.5zM1266.1 779.1h3.5v3.5h-3.5z"/></g>
</svg>

</div>
<div id="status" class="abs"></div>
<div class="abs" style="left:56px;top:850px;width:1440px;height:1px;background:#2a2a2a"></div>
<div class="t" style="left:90.6px;top:833.3px;font-size:11px;color:#979797">Move</div>
<div class="t" style="left:334.6px;top:833.3px;font-size:11px;color:#979797">Pan View</div>
<div class="t" style="left:579px;top:833.3px;font-size:11px;color:#979797">Node Context Menu</div>
<div class="t" style="left:1459.6px;top:833.3px;font-size:11px;color:#8a8a8a;letter-spacing:.3px">3.0.0</div>
<svg class="full" viewBox="0 0 1552 925">
<g fill="none" stroke="#8e8e8e" stroke-width="1.2">
<rect x="66.6" y="834.3" width="10.2" height="14" rx="3.4"/><rect x="312.8" y="834.3" width="10.4" height="14" rx="3.4"/><rect x="557.6" y="834.3" width="10.2" height="14" rx="3.4"/>
</g>
<path d="M66.6 841V837.7A3.4 3.4 0 0 1 70 834.3H71.4V841Z" fill="#8e8e8e"/>
<path d="M79.4 833.6Q80 837.6 79.6 841.4M81.6 835.2V840" stroke="#8e8e8e" stroke-width="1.1" fill="none"/>
<rect x="316.5" y="836" width="3" height="6" rx="1.4" fill="#a2a2a2"/>
<path d="M563 834.3H564.4A3.4 3.4 0 0 1 567.8 837.7V841H563Z" fill="#a0a0a0"/>
</svg>
</div>
</body>
</html>
